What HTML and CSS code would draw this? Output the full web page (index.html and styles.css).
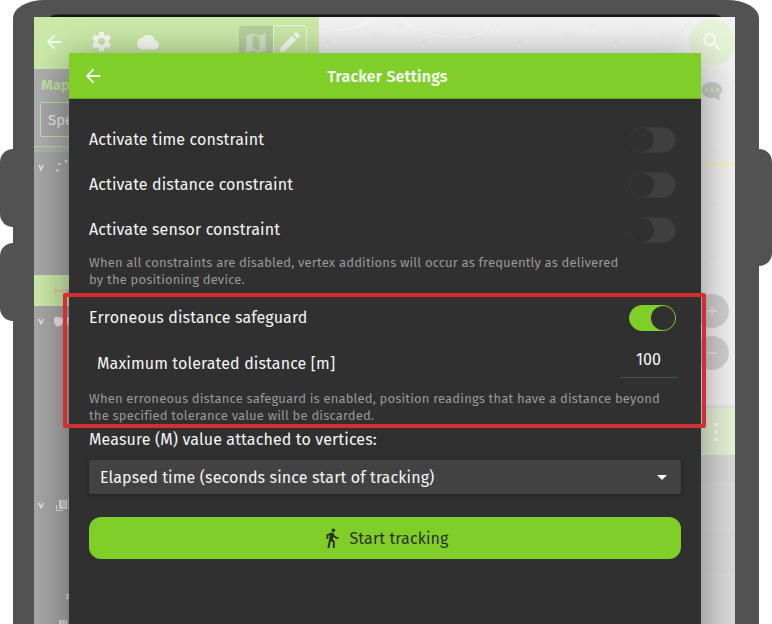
FILE: index.html
```html
<!DOCTYPE html>
<html lang="en">
<head>
<meta charset="utf-8">
<title>Tracker Settings</title>
<link rel="stylesheet" href="styles.css">
</head>
<body>
<div class="stage">
  <div class="keys keys-left"><span class="key key-a"></span><span class="key key-b"></span></div>
  <div class="device">
    <div class="bezel"></div>
    <div class="screen">
      <aside class="sidebar">
        <div class="toolbar">
          <svg class="tool back" viewBox="0 0 24 24"><path d="M20 11H7.83l5.59-5.59L12 4l-8 8 8 8 1.41-1.41L7.83 13H20z"/></svg>
          <svg class="tool gear" viewBox="0 0 24 24"><path d="M19.43 12.98c.04-.32.07-.64.07-.98s-.03-.66-.07-.98l2.11-1.65c.19-.15.24-.42.12-.64l-2-3.46c-.12-.22-.39-.3-.61-.22l-2.49 1c-.52-.4-1.08-.73-1.69-.98l-.38-2.65C14.46 2.18 14.25 2 14 2h-4c-.25 0-.46.18-.49.42l-.38 2.65c-.61.25-1.17.59-1.69.98l-2.49-1c-.23-.09-.49 0-.61.22l-2 3.460c-.13.22-.07.49.12.64l2.11 1.65c-.04.32-.07.65-.07.98s.03.66.07.98l-2.11 1.65c-.19.15-.24.42-.12.64l2 3.46c.12.22.39.3.61.22l2.49-1c.52.4 1.08.73 1.69.98l.38 2.65c.03.24.24.42.49.42h4c.25 0 .46-.18.49-.42l.38-2.65c.61-.25 1.17-.59 1.69-.98l2.49 1c.23.09.49 0 .61-.22l2-3.46c.12-.22.07-.49-.12-.64zM12 15.5a3.5 3.5 0 1 1 0-7 3.5 3.5 0 0 1 0 7z"/></svg>
          <svg class="tool cloud" viewBox="0 0 24 24"><path d="M19.35 10.04A7.49 7.49 0 0 0 12 4C9.11 4 6.6 5.64 5.35 8.04A5.994 5.994 0 0 0 0 14c0 3.31 2.69 6 6 6h13c2.76 0 5-2.24 5-5 0-2.64-2.05-4.78-4.65-4.96z"/></svg>
          <div class="modes">
            <span class="mode mode-map"><svg viewBox="0 0 24 24"><path d="M20.5 3l-.16.03L15 5.1 9 3 3.36 4.9c-.21.07-.36.25-.36.48V20.5c0 .28.22.5.5.5l.16-.03L9 18.9l6 2.1 5.64-1.9c.21-.07.36-.25.36-.48V3.5c0-.28-.22-.5-.5-.5zM15 19l-6-2.11V5l6 2.11V19z"/></svg></span>
            <span class="mode mode-edit"><svg viewBox="0 0 24 24"><path d="M3 17.25V21h3.75L17.81 9.94l-3.75-3.75L3 17.25zM20.71 7.04a1 1 0 0 0 0-1.41l-2.34-2.34a1 1 0 0 0-1.41 0l-1.83 1.83 3.75 3.75 1.83-1.83z"/></svg></span>
          </div>
        </div>
        <div class="theme">
          <div class="theme-title">Map</div>
          <div class="theme-select">Spe</div>
        </div>
        <div class="legend">
          <div class="layer points"><svg class="chev" viewBox="0 0 6 7"><path d="M.8 1 3 5.5 5.2 1"/></svg><svg class="sym" viewBox="0 0 18 18"><circle cx="3.400" cy="12.500" r="1.300"/><circle cx="5.500" cy="6" r="1.300"/><circle cx="12" cy="3.400" r="1.300"/></svg></div>
          <div class="layer active"><svg class="sym" viewBox="0 0 18 10"><path class="track" d="M1 5h16M1 2.5v5M12 3l3 2-3 2"/></svg></div>
          <div class="layer shapes"><svg class="chev" viewBox="0 0 6 7"><path d="M.8 1 3 5.500 5.200 1"/></svg><svg class="sym" viewBox="0 0 18 18"><path d="M0 7c0-3 3-4 5-2.500 3-1 4 1 4 3 1-3 4-4 6-3l-1 8c-2 1-4-1-5-3-1 3-4 4-6 4-2-1-3-3-3-6.500z"/></svg></div>
          <div class="layer group"><svg class="chev" viewBox="0 0 6 7"><path d="M.8 1 3 5.500 5.200 1"/></svg><svg class="sym" viewBox="0 0 18 18"><path d="M3 4h8v9H3z"/><path d="M.500 9v5.500H7M12 3h1v9h-1" fill="none" stroke="currentColor"/><path class="clip" d="M6 10V4.500q0-2.500 1.500-2.500T9 4.500V10q-1 3-2 0V5"/></svg></div>
          <div class="layer child"><svg class="chev" viewBox="0 0 6 7"><path d="M1 1 5 3.500 1 6"/></svg></div>
          <div class="layer next"><svg class="sym" viewBox="0 0 18 18"><path d="M3 4h8v9H3z"/><path class="clip" d="M6 10V4.500q0-2.500 1.500-2.500T9 4.500V10"/></svg></div>
        </div>
      </aside>
      <main class="map">
        <svg class="marks" width="416" height="391" viewBox="0 0 416 391">
          <defs><pattern id="grass" width="96" height="54" patternUnits="userSpaceOnUse"><path d="M8 22l1 5M13 21l-1 6M10 24v3M30 8l1 5M35 7l-1 6M55 17l1 5M60 16l-1 6M78 6l1 5M83 5l-1 6M52 43l1 5M57 42l-1 6"/></pattern></defs>
          <rect class="grass" width="416" height="391" fill="url(#grass)"/>
          <path class="path" d="M0 15Q30 15 50 4M80 0Q100 18 132 20T170 8"/>
          <path class="road" d="M370 147.500H416"/>
        </svg>
        <div class="panel"><div class="panel-head"><svg viewBox="0 0 4 18"><path d="M0 0h4v4H0zM0 7h4v4H0zM0 14h4v4H0z"/></svg></div><div class="panel-row"></div><div class="panel-row"></div><div class="panel-row"></div></div>
        <div class="fab search"><svg viewBox="0 0 24 24"><path d="M15.500 14h-.79l-.28-.27A6.471 6.471 0 0 0 16 9.500 6.500 6.500 0 1 0 9.500 16c1.610 0 3.090-.59 4.230-1.570l.27.28v.79l5 4.990L20.490 19l-4.990-5zm-6 0a4.500 4.500 0 1 1 0-9 4.500 4.500 0 0 1 0 9z"/></svg></div>
        <svg class="bubble" viewBox="0 0 20 19"><path d="M10 0c5.500 0 10 3.200 10 8 0 2.200-1.300 4-3 5.300.1 1.700.6 3.200 2 4.700-3-.2-4.800-1-6-2.500C6 17 0 14 0 8c0-4.800 4.500-8 10-8z"/><g><circle cx="4.300" cy="8" r="1.900"/><circle cx="10" cy="8" r="1.900"/><circle cx="15.700" cy="8" r="1.900"/></g></svg>
        <div class="fab zoom-in"><svg viewBox="0 0 10 10"><path d="M5 0v10M0 5h10"/></svg></div>
        <div class="fab zoom-out"><svg viewBox="0 0 10 10"><path d="M0 5h10"/></svg></div>
      </main>
      <section class="dialog">
        <header class="dialog-head">
          <svg viewBox="0 0 24 24"><path d="M20 11H7.830l5.590-5.590L12 4l-8 8 8 8 1.410-1.410L7.830 13H20z"/></svg>
          <h1>Tracker Settings</h1>
        </header>
        <div class="form">
          <div class="row"><span>Activate time constraint</span><i class="switch"></i></div>
          <div class="row"><span>Activate distance constraint</span><i class="switch"></i></div>
          <div class="row"><span>Activate sensor constraint</span><i class="switch"></i></div>
          <p class="hint">When all constraints are disabled, vertex additions will occur as frequently as delivered<br>by the positioning device.</p>
          <div class="row safeguard"><span>Erroneous distance safeguard</span><i class="switch on"></i></div>
          <div class="row value-row"><span>Maximum tolerated distance [m]</span><b class="value">100</b></div>
          <p class="hint second">When erroneous distance safeguard is enabled, position readings that have a distance beyond<br>the specified tolerance value will be discarded.</p>
          <div class="label">Measure (M) value attached to vertices:</div>
          <div class="select"><span>Elapsed time (seconds since start of tracking)</span><i class="caret"></i></div>
          <div class="button"><svg viewBox="0 0 24 24"><path d="M13.500 5.500c1.100 0 2-.9 2-2s-.9-2-2-2-2 .9-2 2 .9 2 2 2zM9.800 8.900 7 23h2.100l1.800-8 2.100 2v6h2v-7.500l-2.100-2 .6-3C14.800 12 16.800 13 19 13v-2c-1.900 0-3.500-1-4.300-2.400l-1-1.600c-.4-.6-1-1-1.700-1-.3 0-.5.1-.8.1L6 8.300V13h2V9.600l1.800-.7"/></svg><span>Start tracking</span></div>
        </div>
      </section>
    </div>
  </div>
  <div class="keys keys-right"><span class="key key-c"></span></div>
  <div class="highlight"></div>
</div>
</body>
</html>
```
FILE: styles.css
```css
* { box-sizing: border-box; }
body { margin: 0; background: #fff; font-family: "Fira Sans", "Noto Sans", sans-serif; font-size: 16px; color: #f5f5f5; }
svg { display: block; flex: none; fill: currentColor; }
.stage { position: relative; display: flex; width: 772px; height: 624px; overflow: hidden; }
.keys { width: 13px; padding-top: 149px; display: flex; flex-direction: column; gap: 16px; }
.key { display: block; height: 78px; background: #525252; border-radius: 13px 0 0 13px; }
.key-c { height: 117px; border-radius: 0 13px 13px 0; }
.device { width: 746px; height: 660px; padding: 14px 24px 0 21px; background: #525252; border-radius: 32px 32px 0 0 / 18px 18px 0 0; }
.bezel { height: 3px; margin: 0 14px 0 16px; background: #161616; border-radius: 10px 10px 0 0 / 3px 3px 0 0; border-top: 1px solid #333; }
.screen { position: relative; display: flex; height: 607px; overflow: hidden; background: #ededed; }
.sidebar { width: 285px; background: #a8a8a8; }
.toolbar { display: flex; height: 52px; background: #cbeaa7; align-items: flex-start; color: #fafdf6; }
.back { width: 22px; height: 22px; margin-left: 9px; margin-top: 14px; }
.gear { width: 23px; height: 23px; margin: 13px 0 0 25px; }
.cloud { width: 22px; height: 22px; margin: 14px 0 0 24px; }
.modes { display: flex; margin: 8px 0 0 80px; }
.mode { display: block; width: 34px; height: 34px; padding: 4px; }
.mode svg { width: 26px; height: 26px; }
.mode-map { margin-top: 1px; background: #b7cf9b; color: #d5e2c7; border-radius: 3px 0 0 3px; }
.mode-edit { border: 1px solid #edf7e1; border-radius: 3px; padding: 3px; }
.theme { height: 83px; padding: 6px; background: #afafaf; border-bottom: 5px solid #b2b5af; box-shadow: inset 0 -1px #b9dc92; }
.theme-title { height: 20px; line-height: 21px; padding-left: 1px; font-size: 15px; font-weight: 700; color: #c3e2a1; }
.theme-select { margin-top: 7px; height: 35px; border: 1px solid #c3e2a1; border-radius: 2px; padding-left: 7px; line-height: 34px; color: #ededed; background: #a9a9a9; font-size: 15px; }
.layer { display: flex; height: 31px; align-items: center; padding-left: 4px; color: #e6e6e6; }
.chev { width: 6px; height: 7px; fill: none; stroke: currentColor; stroke-width: 1.500; }
.sym { width: 18px; height: 18px; margin-left: 10px; }
.points { height: 123px; align-items: flex-start; padding-top: 12px; }
.points .sym { margin-top: -6px; }
.active { background: #cbebaa; padding-left: 10px; }
.active .sym { height: 10px; }
.track { fill: none; stroke: #e8b9a0; stroke-width: 1.200; }
.shapes { height: 168px; align-items: flex-start; padding-top: 12px; }
.shapes .sym { margin-top: -5px; }
.group { height: 62px; align-items: flex-start; padding-top: 28px; }
.group .sym { margin-left: 12px; margin-top: -6px; }
.clip { fill: none; stroke: #a6cf7e; stroke-width: .9; }
.child { height: 120px; padding: 0 0 0 31px; }
.next { height: 30px; padding-left: 12px; margin-top: -46px; }
.map { position: relative; width: 416px; display: flex; flex-direction: column; background: #f2f2f2; }
.marks pattern path { stroke: #eaeaea; stroke-width: 1; }
.marks .path { fill: none; stroke: #f6f6f6; stroke-width: 2; }
.marks .road { stroke: #f8f5c2; stroke-width: 3; }
.panel { height: 216px; background: #dcdcdc; box-shadow: 0 -2px 4px rgba(0,0,0,.08); }
.panel-head { display: flex; justify-content: flex-end; height: 47px; padding: 15px 17px; background: #e5f3d6; color: #fafcf6; }
.panel-head svg { width: 4px; height: 18px; }
.panel-row { height: 46px; border-bottom: 1px solid #dfdfdf; }
.panel-row:nth-child(2) { height: 29px; background: #d9d9d9; }
.fab { position: absolute; display: grid; place-items: center; border-radius: 50%; }
.search { left: 370px; top: 2px; width: 46px; height: 46px; background: #e5f3d6; color: #fbfdf8; }
.search svg { width: 24px; height: 24px; }
.bubble { position: absolute; left: 383px; top: 65px; width: 20px; height: 19px; color: #cecece; }
.bubble g { fill: #d6e8c1; }
.zoom-in, .zoom-out { left: 376px; top: 277px; width: 34px; height: 34px; background: #d1d1d1; color: #eee; }
.zoom-out { top: 319px; }
.zoom-in svg, .zoom-out svg { width: 10px; height: 10px; stroke: currentColor; stroke-width: 1.300; }
.dialog { position: absolute; left: 35px; top: 36px; width: 632px; height: 620px; background: #303030; box-shadow: 0 8px 40px rgba(0,0,0,.45); }
.dialog-head { display: grid; grid-template-columns: 48px 1fr 48px; align-items: center; height: 46px; background: #80cf29; border-bottom: 1px solid #68a525; }
.dialog-head svg { width: 22px; height: 22px; margin-left: 13px; margin-top: 1px; }
h1 { margin: 2px 0 0; padding-left: 5px; text-align: center; font-size: 16px; line-height: 24px; font-weight: 600; letter-spacing: .16px; }
.form { padding: 18px 20px 0; letter-spacing: .12px; }
.row { display: flex; justify-content: space-between; align-items: center; height: 45px; padding-right: 5px; line-height: 24px; white-space: nowrap; }
.switch { width: 47px; height: 26px; border-radius: 13px; background: #3f3f3f; border: 1px solid #393939; display: flex; margin-top: 1px; }
.switch::before { content: ""; width: 24px; height: 24px; border-radius: 50%; background: #303030; }
.switch.on { background: #80cf29; border-color: #80cf29; justify-content: flex-end; }
.hint { margin: 2px 0 0; height: 38px; font-size: 13px; line-height: 17px; color: #999; white-space: nowrap; letter-spacing: .17px; }
.safeguard { margin-top: 3px; height: 45px; }
.value-row { height: 47px; padding-left: 8px; padding-right: 4px; }
.value { width: 57px; height: 34px; font-weight: 400; line-height: 32px; text-align: center; border-bottom: 1px solid #38633a; margin-top: -6px; }
.hint.second { margin-top: 3px; height: 39px; }
.label { height: 24px; line-height: 24px; margin-top: -1px; }
.select { display: flex; align-items: center; justify-content: space-between; margin-top: 8px; height: 34px; padding: 0 14px 0 11px; background: #424242; border-radius: 2px; box-shadow: 0 1px 4px rgba(0,0,0,.4); white-space: nowrap; }
.caret { border: 5px solid transparent; border-top-color: #fff; border-bottom: 0; }
.button { display: flex; align-items: center; justify-content: center; gap: 6px; margin-top: 23px; height: 42px; border-radius: 12px; background: #80cf29; color: #2b3022; }
.button svg { width: 22px; height: 22px; }
.highlight { position: absolute; left: 63px; top: 293px; width: 643px; height: 135px; border: 4px solid #d32f2f; border-radius: 2px; }
```
